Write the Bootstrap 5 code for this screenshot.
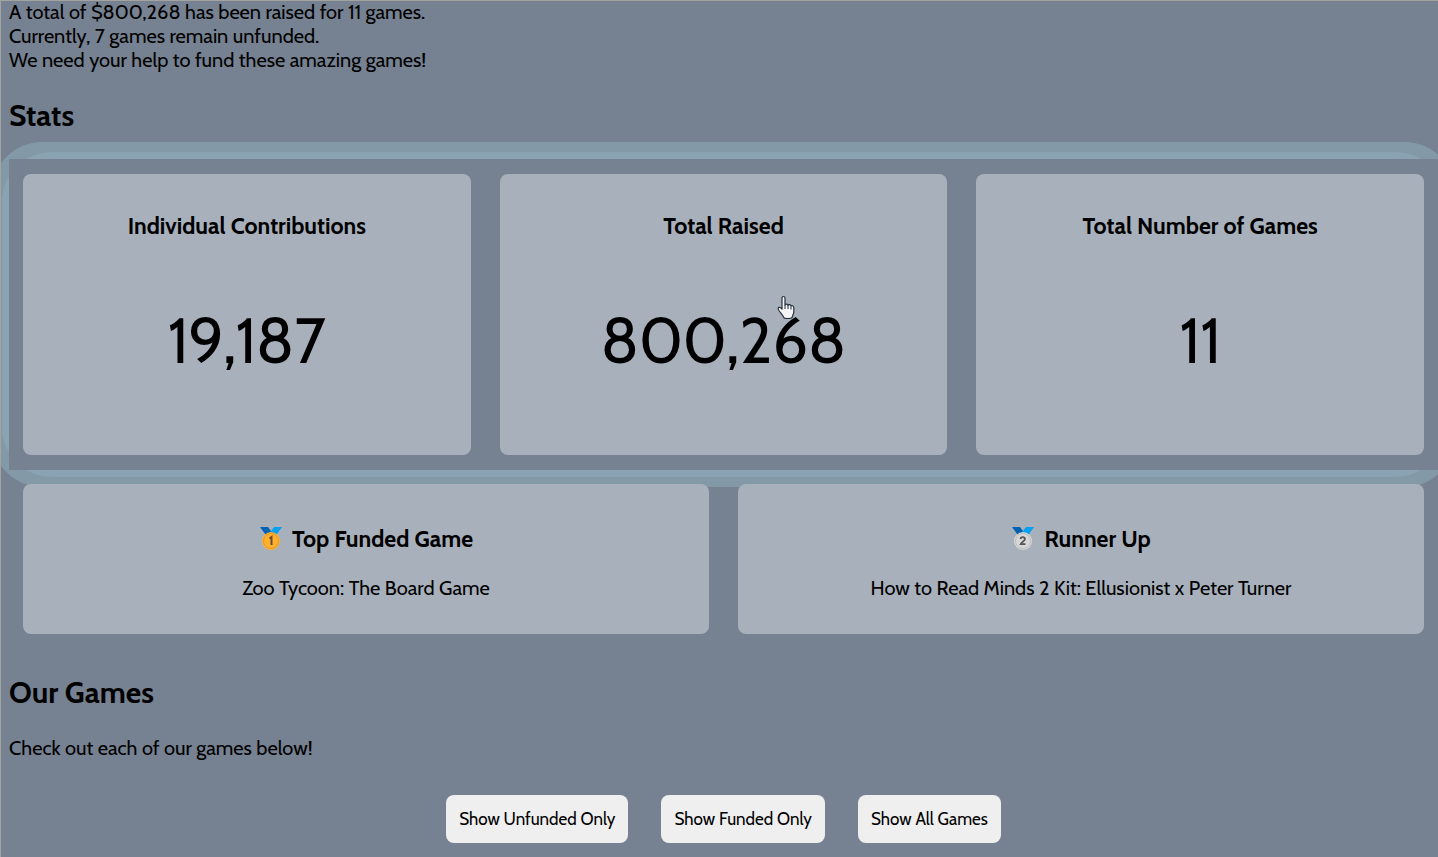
<!DOCTYPE html>
<html lang="en">
<head>
<meta charset="utf-8">
<meta name="viewport" content="width=device-width, initial-scale=1">
<title>Our Games</title>
<link href="https://cdn.jsdelivr.net/npm/bootstrap@5.3.0/dist/css/bootstrap.min.css" rel="stylesheet">
<style>
  html { background: #768191; }
  body {
    min-height: 100vh;
    padding-left: 8px;
    border-top: 1px solid #a3a49f;
    border-left: 1px solid #a3a49f;
    background: #768191;
    color: #000;
    font-family: Cabin, Lato, sans-serif;
    font-size: 20px;
    line-height: 24px;
    overflow-x: hidden;
  }
  h2 { font-size: 30px; font-weight: 700; line-height: 36px; }
  h3 { font-size: 23px; font-weight: 700; line-height: 28px; }
  .intro { margin-top: -1px; }
  .page-title { margin: 26px 0 25px; }
  .stats { position: relative; z-index: 0; }
  .stats::before, .stats::after { content: ""; position: absolute; z-index: -2; }
  .stats::before { inset: -17px; border-radius: 50px; background: #8399a7; }
  .stats::after { inset: -7px; border-radius: 50px; background: #8aa3b2; }
  .stats-panel { background: #768191; }
  .tiles { display: grid; gap: 29px; padding: 15px 14px; }
  .tiles-three { grid-template-columns: repeat(3, minmax(0, 1fr)); }
  .tiles-two { grid-template-columns: repeat(2, minmax(0, 1fr)); padding-top: 14px; position: relative; z-index: 1; }
  .tile { background: #a8b0bc; border-radius: 8px; text-align: center; }
  .tile-stat { min-height: 281px; padding: 38px 14px; }
  .tile-game { min-height: 150px; padding: 41px 14px 30px; }
  .tile-game p { margin-top: 23px; }
  .figure-number { font-size: 63px; line-height: 78px; margin-top: 62px; }
  .medal { width: 24px; height: 24px; margin-right: 9px; }
  .pointer { position: absolute; left: calc(50% + 53px); top: 136px; width: 20px; height: 26px; }
  .filters { gap: 33px; margin-top: 35px; padding-bottom: 15px; }
  .btn-filter, .btn-filter:hover {
    background: #efefef; color: #000; border: 0; border-radius: 8px;
    padding: 12px 13px; font-size: 17px; line-height: 24px;
  }
</style>
</head>
<body>
<main>
  <p class="intro mb-0">A total of $800,268 has been raised for 11 games.<br>Currently, 7 games remain unfunded.<br>We need your help to fund these amazing games!</p>
  <h2 class="page-title">Stats</h2>

  <section class="stats" aria-label="Stats">
    <div class="stats-panel tiles tiles-three">
      <div class="tile tile-stat"><h3 class="m-0">Individual Contributions</h3><p class="figure-number mb-0">19,187</p></div>
      <div class="tile tile-stat"><h3 class="m-0">Total Raised</h3><p class="figure-number mb-0">800,268</p></div>
      <div class="tile tile-stat"><h3 class="m-0">Total Number of Games</h3><p class="figure-number mb-0">11</p></div>
    </div>
    <svg class="pointer" viewBox="0 0 20 26" aria-hidden="true">
      <path d="M5 3.2C5 .9 8 .9 8 3.2V10c.4-1.3 2.7-1.2 3 .4.6-1.2 2.7-.9 3 .7.8-1 2.8-.5 2.8 1.4V17c0 2-1.3 3.2-1.6 5.2-.6 1.7-8 1.8-8.6 0C5.800 19.500 1.600 16.500 1.200 14c-.3-1.700 1.500-2.200 2.600-1.100L5 14.200Z" fill="#f5f5f5" stroke="#25313f" stroke-width="1.200" stroke-linejoin="round"/>
      <path d="M8 10v4M11 10.500V14M14 11.500V14.500" stroke="#25313f" fill="none"/>
    </svg>
  </section>

  <div class="tiles tiles-two">
    <div class="tile tile-game">
      <h3 class="m-0 d-flex justify-content-center align-items-center">
        <svg class="medal" viewBox="0 0 24 24" aria-hidden="true"><path d="M1 0h8l5 7-5 4Z" fill="#0063b1"/><path d="M15 0h8l-7 10-7-2Z" fill="#0aa0f0"/><circle cx="12" cy="14" r="9" fill="#ffb02e"/><circle cx="12" cy="14" r="7.500" fill="none" stroke="#e79a24"/><path d="M10.500 11.500 12.500 10V18" fill="none" stroke="#6d4b35" stroke-width="2"/></svg>
        Top Funded Game</h3>
      <p class="mb-0">Zoo Tycoon: The Board Game</p>
    </div>
    <div class="tile tile-game">
      <h3 class="m-0 d-flex justify-content-center align-items-center">
        <svg class="medal" viewBox="0 0 24 24" aria-hidden="true"><path d="M1 0h8l5 7-5 4Z" fill="#0063b1"/><path d="M15 0h8l-7 10-7-2Z" fill="#0aa0f0"/><circle cx="12" cy="14" r="9" fill="#d8d8d8"/><circle cx="12" cy="14" r="7.500" fill="none" stroke="#bdbdbd"/><path d="M9.500 12c0-2.500 4.800-2.300 4.500.2-.2 1.600-3 2.600-4.200 5h4.700" fill="none" stroke="#555" stroke-width="1.800"/></svg>
        Runner Up</h3>
      <p class="mb-0">How to Read Minds 2 Kit: Ellusionist x Peter Turner</p>
    </div>
  </div>

  <h2 class="page-title">Our Games</h2>
  <p class="mb-0">Check out each of our games below!</p>
  <div class="filters d-flex justify-content-center flex-wrap">
    <button type="button" class="btn btn-filter">Show Unfunded Only</button>
    <button type="button" class="btn btn-filter">Show Funded Only</button>
    <button type="button" class="btn btn-filter">Show All Games</button>
  </div>
</main>
<script src="https://cdn.jsdelivr.net/npm/bootstrap@5.3.0/dist/js/bootstrap.bundle.min.js"></script>
</body>
</html>
